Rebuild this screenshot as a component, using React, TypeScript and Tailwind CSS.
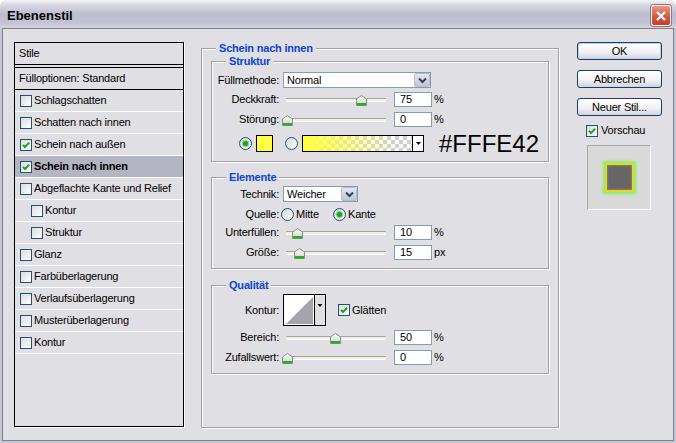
import React from 'react';

const styleRows = [
    { name: 'Schlagschatten', checked: false },
    { name: 'Schatten nach innen', checked: false },
    { name: 'Schein nach außen', checked: true },
    { name: 'Schein nach innen', checked: true, selected: true },
    { name: 'Abgeflachte Kante und Relief', checked: false },
    { name: 'Kontur', checked: false, indent: true },
    { name: 'Struktur', checked: false, indent: true },
    { name: 'Glanz', checked: false },
    { name: 'Farbüberlagerung', checked: false },
    { name: 'Verlaufsüberlagerung', checked: false },
    { name: 'Musterüberlagerung', checked: false },
    { name: 'Kontur', checked: false },
];

const Check = ({ checked }: { checked: boolean }) => (
    <span className="flex h-[12px] w-[12px] shrink-0 border border-[#1c5180] bg-[linear-gradient(135deg,#dcdcd7,#ffffff)]">
        {checked && (
            <svg viewBox="0 0 10 10" className="h-full w-full">
                <path d="M2 4.8 L4 7 L8.2 2.6" fill="none" stroke="#21a121" strokeWidth="2" />
            </svg>
        )}
    </span>
);

const Radio = ({ checked }: { checked: boolean }) => (
    <span className="flex h-[13px] w-[13px] shrink-0 items-center justify-center rounded-full border border-[#1c5180] bg-[linear-gradient(135deg,#d6d6d0,#ffffff)]">
        {checked && <span className="h-[5px] w-[5px] rounded-full bg-[#21a121] shadow-[0_0_0_1px_#7ad27a]" />}
    </span>
);

const Slider = ({ pos }: { pos: number }) => (
    <div className="relative ml-[4px] h-[15px] w-[106px]">
        <div className="absolute left-[3px] right-[3px] top-[6px] h-[3px] rounded-[1px] border-t border-[#a3a39b] bg-[#efefe6] shadow-[0_1px_0_#fff]" />
        <svg className="absolute top-[3px]" style={{ left: 3 + pos - 5 }} width="11" height="11" viewBox="0 0 11 11">
            <defs>
                <linearGradient id="thumb" x1="0" y1="0" x2="0" y2="1">
                    <stop offset="0" stopColor="#ffffff" />
                    <stop offset="1" stopColor="#cfcfcb" />
                </linearGradient>
            </defs>
            <path d="M0.5 10.5 V4 L5.5 0.5 L10.5 4 V10.5 Z" fill="url(#thumb)" stroke="#8c8c88" />
            <rect x="1" y="8" width="9" height="2.5" fill="#27ae27" />
        </svg>
    </div>
);

const NumBox = ({ v }: { v: string }) => (
    <div className="ml-[5px] flex h-[15px] w-[38px] items-center border border-[#7f9db9] bg-white pl-[5px]">{v}</div>
);

const Label = ({ text, h = 'h-[15px]' }: { text: string; h?: string }) => (
    <div className={`flex w-[67px] shrink-0 items-center justify-end ${h}`}>{text}</div>
);

const SliderRow = ({ label, pos, value, unit, mt }: { label: string; pos: number; value: string; unit: string; mt: string }) => (
    <div className={`flex h-[15px] items-center ${mt}`}>
        <Label text={label} />
        <Slider pos={pos} />
        <NumBox v={value} />
        <span className="ml-[2px]">{unit}</span>
    </div>
);

const Select = ({ value, width }: { value: string; width: string }) => (
    <div className={`ml-[4px] flex h-[16px] items-center justify-between border border-[#7f9db9] bg-white pl-[3px] ${width}`}>
        <span>{value}</span>
        <span className="flex h-[14px] w-[16px] items-center justify-center rounded-[2px] border border-[#b9bcc9] bg-[linear-gradient(to_bottom,#e6e7ee,#c3c5d3)]">
            <svg width="9" height="7" viewBox="0 0 9 7">
                <path d="M1 1.5 L4.5 5 L8 1.5" fill="none" stroke="#34405c" strokeWidth="2" />
            </svg>
        </span>
    </div>
);

const Group = ({ title, className, children }: { title: string; className: string; children?: React.ReactNode }) => (
    <div className={`relative border border-[#a2a2a6] shadow-[inset_1px_1px_0_#fff,1px_1px_0_#fff] ${className}`}>
        <span className="absolute left-[14px] top-[-7px] bg-[#e0dfe3] px-[3px] text-[11px] font-bold leading-[13px] text-[#0a46d2]">
            {title}
        </span>
        {children}
    </div>
);

const Button = ({ label, isDefault }: { label: string; isDefault?: boolean }) => (
    <div
        className={`flex h-[18px] w-[85px] items-center justify-center rounded-[3px] border border-[#1f3a66] bg-[linear-gradient(to_bottom,#ffffff,#f2f2f5_55%,#d3d3dd)] ${
            isDefault ? 'shadow-[inset_0_0_0_1px_#c4d0ea]' : ''
        }`}
    >
        {label}
    </div>
);

export default function App() {
    return (
        <div className="flex h-[443px] w-[676px] flex-col overflow-hidden rounded-t-[7px] bg-[#c6c6d3] font-['Liberation_Sans',Arial,sans-serif] text-[11px] leading-[13px] tracking-[-0.2px] text-black">
            {/* title bar */}
            <div className="flex h-[28px] shrink-0 items-center justify-between bg-[linear-gradient(to_bottom,#f6f6fa_0%,#dcdce6_14%,#bdbdd0_50%,#c3c3d4_82%,#d3d3de_100%)] pl-[7px] pr-[5px] pt-[3px]">
                <span className="text-[13px] font-bold tracking-[0px]">Ebenenstil</span>
                <span className="flex h-[21px] w-[20px] items-center justify-center rounded-[3px] border border-white bg-[linear-gradient(to_bottom,#e9988a,#cf5a46_55%,#c0412d)] shadow-[0_0_0_1px_#b06a60]">
                    <svg width="12" height="12" viewBox="0 0 12 12">
                        <path d="M2 2 L10 10 M10 2 L2 10" stroke="#fff" strokeWidth="2.2" />
                    </svg>
                </span>
            </div>

            {/* body */}
            <div className="mx-[2px] flex h-[413px] shrink-0 items-start border border-[#7f7f8e] bg-[#e0dfe3] pl-[11px] pt-[13px]">
                {/* styles list */}
                <div className="flex h-[385px] w-[170px] shrink-0 flex-col border border-black shadow-[1px_1px_0_#fff]">
                    <div className="flex h-[22px] shrink-0 items-center border-b border-black pl-[4px]">Stile</div>
                    <div className="h-[2px] shrink-0" />
                    <div className="flex h-[23px] shrink-0 items-center border-y border-black pl-[4px]">Fülloptionen: Standard</div>
                    {styleRows.map((row, i) => (
                        <div
                            key={i}
                            className={`flex h-[22px] shrink-0 items-center border-b border-white ${row.indent ? 'pl-[16px]' : 'pl-[5px]'} ${
                                row.selected ? 'bg-[#b3b5c2] font-bold' : ''
                            }`}
                        >
                            <Check checked={row.checked} />
                            <span className="ml-[2px]">{row.name}</span>
                        </div>
                    ))}
                </div>

                {/* settings */}
                <Group title="Schein nach innen" className="ml-[17px] mt-[6px] h-[380px] w-[358px] shrink-0 px-[9px] pt-[12px]">
                    <Group title="Struktur" className="h-[101px] pt-[10px]">
                        <div className="flex h-[16px] items-center">
                            <Label text="Füllmethode:" h="h-[16px]" />
                            <Select value="Normal" width="w-[148px]" />
                        </div>
                        <SliderRow label="Deckkraft:" pos={75} value="75" unit="%" mt="mt-[4px]" />
                        <SliderRow label="Störung:" pos={1} value="0" unit="%" mt="mt-[5px]" />
                        <div className="mt-[8px] flex h-[17px] items-center pl-[27px]">
                            <Radio checked />
                            <span className="ml-[4px] h-[17px] w-[17px] border border-black bg-[#fffe42]" />
                            <span className="ml-[12px]">
                                <Radio checked={false} />
                            </span>
                            <span className="ml-[4px] flex h-[17px] w-[122px] border border-black">
                                <span className="flex-1 bg-[linear-gradient(to_right,#fffe42_4%,rgba(255,254,66,0)_85%),repeating-conic-gradient(#cfcfcf_0%_25%,#ffffff_0%_50%)] bg-[length:100%_100%,8px_8px]" />
                                <span className="flex w-[11px] items-center justify-center border-l border-black bg-white">
                                    <svg width="5" height="3" viewBox="0 0 5 3">
                                        <path d="M0 0 H5 L2.5 3 Z" fill="#000" />
                                    </svg>
                                </span>
                            </span>
                            <span className="ml-[15px] text-[24px] leading-none tracking-[0px]">#FFFE42</span>
                        </div>
                    </Group>

                    <Group title="Elemente" className="mt-[15px] h-[92px] pt-[8px]">
                        <div className="flex h-[16px] items-center">
                            <Label text="Technik:" h="h-[16px]" />
                            <Select value="Weicher" width="w-[75px]" />
                        </div>
                        <div className="mt-[5px] flex h-[14px] items-center">
                            <Label text="Quelle:" h="h-[14px]" />
                            <span className="ml-[2px]">
                                <Radio checked={false} />
                            </span>
                            <span className="ml-[2px] w-[37px]">Mitte</span>
                            <Radio checked />
                            <span className="ml-[2px]">Kante</span>
                        </div>
                        <SliderRow label="Unterfüllen:" pos={11} value="10" unit="%" mt="mt-[4px]" />
                        <SliderRow label="Größe:" pos={13} value="15" unit="px" mt="mt-[5px]" />
                    </Group>

                    <Group title="Qualität" className="mt-[16px] h-[89px] pt-[8px]">
                        <div className="flex h-[32px] items-center">
                            <Label text="Kontur:" h="h-[32px]" />
                            <svg className="ml-[4px]" width="43" height="32" viewBox="0 0 43 32">
                                <rect x="0.5" y="0.5" width="42" height="31" fill="#e0dfe3" stroke="#000" />
                                <rect x="1" y="1" width="30" height="30" fill="#ffffff" />
                                <polygon points="3,30 30,3 30,30" fill="#a4a4aa" />
                                <line x1="31.5" y1="0" x2="31.5" y2="32" stroke="#000" />
                                <path d="M34.5 10 H39.5 L37 13 Z" fill="#000" />
                            </svg>
                            <span className="ml-[12px]">
                                <Check checked />
                            </span>
                            <span className="ml-[2px]">Glätten</span>
                        </div>
                        <SliderRow label="Bereich:" pos={49} value="50" unit="%" mt="mt-[4px]" />
                        <SliderRow label="Zufallswert:" pos={1} value="0" unit="%" mt="mt-[5px]" />
                    </Group>
                </Group>

                {/* buttons */}
                <div className="ml-[18px] flex flex-col">
                    <Button label="OK" isDefault />
                    <div className="mt-[10px]">
                        <Button label="Abbrechen" />
                    </div>
                    <div className="mt-[10px]">
                        <Button label="Neuer Stil..." />
                    </div>
                    <div className="mt-[8px] flex h-[13px] items-center pl-[9px]">
                        <Check checked />
                        <span className="ml-[3px]">Vorschau</span>
                    </div>
                    <div className="ml-[10px] mt-[8px] flex h-[65px] w-[64px] items-center justify-center border border-[#a7a6aa] border-b-white border-r-white bg-[#d9d9d9]">
                        <div className="h-[25px] w-[25px] bg-[#666666] shadow-[inset_0_0_2px_1px_#8c8060,0_0_0_2px_#ead52e,0_0_2px_4px_#86f266]" />
                    </div>
                </div>
            </div>
        </div>
    );
}
